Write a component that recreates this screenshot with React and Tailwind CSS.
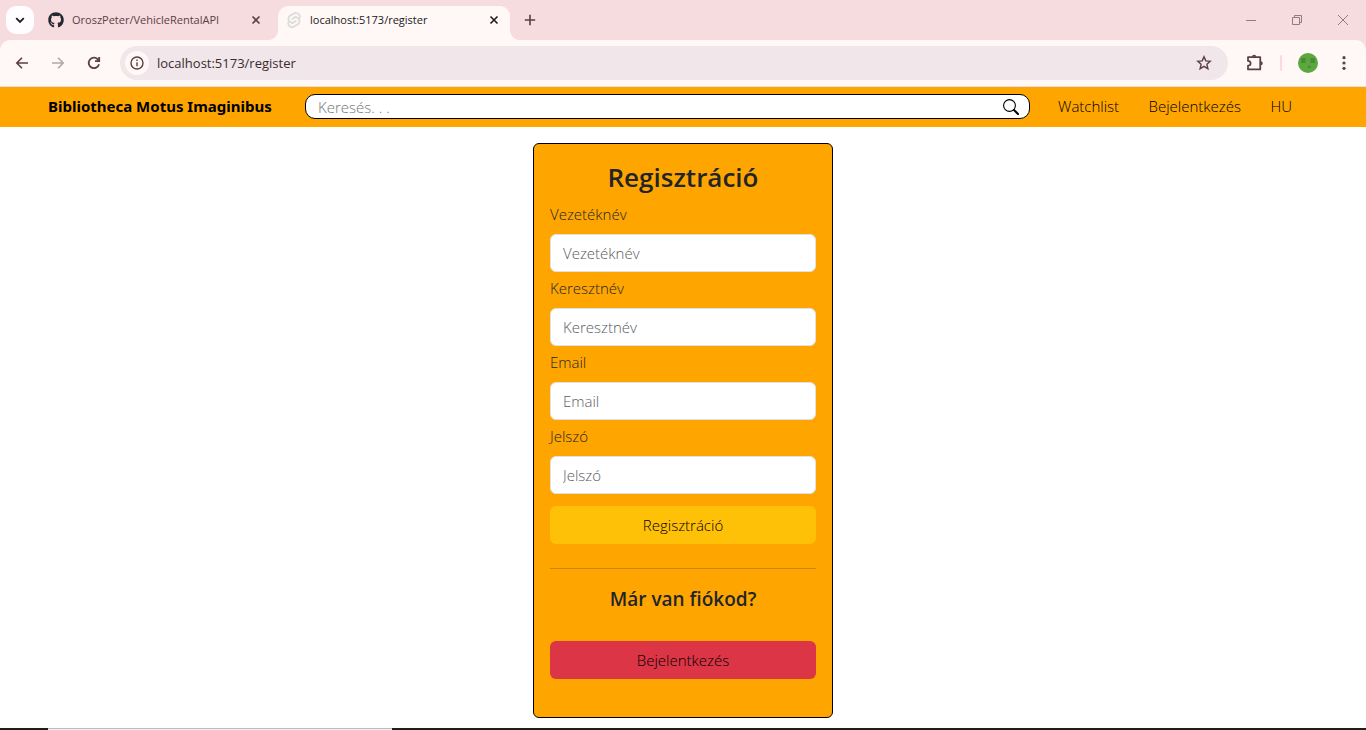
import { FaGithub } from "react-icons/fa";
import { SiSvelte } from "react-icons/si";

function Stroke({ size = 16, width = 1.6, children }) {
  return (
    <svg
      width={size}
      height={size}
      viewBox="0 0 16 16"
      fill="none"
      stroke="currentColor"
      strokeWidth={width}
      aria-hidden="true"
      className="shrink-0"
    >
      {children}
    </svg>
  );
}

function CloseIcon() {
  return (
    <Stroke>
      <path d="M4.500 4.500l7 7M11.500 4.500l-7 7" />
    </Stroke>
  );
}

function TabStrip() {
  return (
    <div className="flex h-10 items-center bg-[#f6dbdf] pl-1.5 text-[11px] text-[#5b3f44]">
      <button type="button" aria-label="Search tabs" className="flex size-7 items-center justify-center rounded-[10px] bg-[#fffdff] text-[#201a1b]">
        <Stroke width={1.8}>
          <path d="M4.2 6.2L8 10l3.8-3.8" />
        </Stroke>
      </button>
      <div className="ml-3.5 flex w-[220px] items-center">
        <FaGithub className="size-4 shrink-0 text-[#24292f]" />
        <span className="ml-2 grow whitespace-nowrap">OroszPeter/VehicleRentalAPI</span>
        <button type="button" aria-label="Close tab" className="mr-1">
          <CloseIcon />
        </button>
      </div>
      <span className="size-2.5 self-end bg-[radial-gradient(circle_at_0_0,#f6dbdf_9.5px,#fff8f7_10.5px)]" />
      <div className="flex h-[34px] w-[232px] items-center self-end rounded-t-[10px] bg-[#fff8f7] pb-1.5 pl-2 text-[#201a1b]">
        <SiSvelte className="size-4 shrink-0 text-[#dcdcdc]" />
        <span className="ml-2 grow whitespace-nowrap">localhost:5173/register</span>
        <button type="button" aria-label="Close tab" className="mr-2">
          <CloseIcon />
        </button>
      </div>
      <span className="size-2.5 self-end bg-[radial-gradient(circle_at_100%_0,#f6dbdf_9.5px,#fff8f7_10.5px)]" />
      <button type="button" aria-label="New tab" className="ml-0.5">
        <Stroke>
          <path d="M8 2.8v10.4M2.8 8h10.4" />
        </Stroke>
      </button>
      <div className="ml-auto flex items-center gap-[30px] pr-[15px] text-[#8f7d81]">
        <button type="button" aria-label="Minimize">
          <Stroke width={1}>
            <path d="M3 8.5h10" />
          </Stroke>
        </button>
        <button type="button" aria-label="Restore">
          <Stroke width={1}>
            <path d="M3.5 5.5h7v7h-7zM5.500 5.500v-2h7v7h-2" />
          </Stroke>
        </button>
        <button type="button" aria-label="Close">
          <Stroke width={1}>
            <path d="M3 3l10 10M13 3L3 13" />
          </Stroke>
        </button>
      </div>
    </div>
  );
}

function Toolbar() {
  return (
    <div className="bg-[#f6dbdf]">
      <div className="flex h-[47px] items-center rounded-t-[10px] border-b border-[#eadde3] bg-[#fff8f7] pr-3.5 pl-3.5 text-[#5b3f44]">
        <button type="button" aria-label="Back">
          <Stroke>
            <path d="M14 8H3M8 2.800L2.800 8l5.200 5.200" />
          </Stroke>
        </button>
        <button type="button" aria-label="Forward" className="ml-5 text-[#b5a5a7]">
          <Stroke>
            <path d="M2 8h11M8 2.800L13.200 8 8 13.200" />
          </Stroke>
        </button>
        <button type="button" aria-label="Reload" className="ml-5">
          <Stroke width={1.8}>
            <path d="M13 9.200A5.200 5.200 0 1 1 11.800 4.400L13 5.600M13.200 2v4.200H9" />
          </Stroke>
        </button>
        <div className="ml-[18px] flex h-[34px] grow items-center rounded-full bg-[#f1e6ea] pr-4 pl-[5px]">
          <button type="button" aria-label="Site information" className="flex size-6 items-center justify-center rounded-full bg-[#fff8f7]">
            <Stroke width={1.4}>
              <circle cx="8" cy="8" r="6" />
              <path d="M8 7.200v4M8 4.500v1.400" />
            </Stroke>
          </button>
          <input
            aria-label="Address"
            defaultValue="localhost:5173/register"
            className="ml-2 h-6 min-w-0 grow bg-transparent text-[13px] text-[#3a2c2f] outline-none"
          />
          <button type="button" aria-label="Bookmark this page">
            <Stroke width={1.4}>
              <path d="M8 1.800l1.800 4.100 4.400.4-3.300 3 1 4.400L8 11.400l-3.900 2.300 1-4.400-3.300-3 4.400-.4z" />
            </Stroke>
          </button>
        </div>
        <button type="button" aria-label="Extensions" className="ml-4">
          <Stroke size={20} width={1.4}>
            <path
              strokeLinejoin="round"
              d="M3.200 3.300h9.800v9.800H3.200v-3c1.400 0 2.100-.8 2.100-1.900s-.7-1.900-2.100-1.900z"
            />
            <path fill="currentColor" stroke="none" d="M6.400 3a1.700 1.700 0 0 1 3.400 0zM13.300 6.500a1.700 1.700 0 0 1 0 3.400z" />
          </Stroke>
        </button>
        <span className="ml-4 h-4 w-0.5 rounded bg-[#ffd9df]" />
        <button type="button" aria-label="Profile" className="ml-4">
          <svg width="20" height="20" viewBox="0 0 20 20" aria-hidden="true">
            <circle cx="10" cy="10" r="10" fill="#5ba83f" />
            <path fill="#4a8a3b" d="M3 5h4.500v5H3zM12.500 5H17v5h-4.500zM10 12.500h2.500V15H10z" />
          </svg>
        </button>
        <button type="button" aria-label="Menu" className="ml-[18px]">
          <svg width="16" height="16" viewBox="0 0 16 16" fill="currentColor" aria-hidden="true">
            <circle cx="8" cy="2.700" r="1.600" />
            <circle cx="8" cy="8" r="1.600" />
            <circle cx="8" cy="13.300" r="1.600" />
          </svg>
        </button>
      </div>
    </div>
  );
}

function SiteNav() {
  return (
    <nav className="flex h-10 items-center bg-[#ffa500] pr-[74px] pb-px pl-12 text-black">
      <a href="#home" className="w-[257px] shrink-0 font-['Noto_Sans',sans-serif] text-[15px] font-bold whitespace-nowrap">
        Bibliotheca Motus Imaginibus
      </a>
      <form className="flex h-[25px] grow items-center rounded-[10px] border border-black bg-white pr-2.5 pl-3">
        <input
          type="search"
          aria-label="Keresés"
          placeholder="Keresés. . ."
          className="min-w-0 grow bg-transparent text-[15px] leading-5 font-light outline-none placeholder:text-[#757575]"
        />
        <button type="button" aria-label="Keresés">
          <Stroke width={1.1}>
            <circle cx="6.500" cy="6.500" r="5.900" />
            <path strokeWidth="2" strokeLinecap="round" d="M11 11l4 4" />
          </Stroke>
        </button>
      </form>
      <div className="ml-7 flex w-[234px] justify-between text-[15px] font-light">
        <a href="#watchlist">Watchlist</a>
        <a href="#login">Bejelentkezés</a>
        <a href="#language">HU</a>
      </div>
    </nav>
  );
}

const fields = [
  { id: "last-name", label: "Vezetéknév", type: "text" },
  { id: "first-name", label: "Keresztnév", type: "text" },
  { id: "email", label: "Email", type: "email" },
  { id: "password", label: "Jelszó", type: "password" },
];

function RegisterCard() {
  return (
    <form className="w-[300px] rounded-md border border-black bg-[#ffa500] px-4 pt-4 pb-[38px] text-[#212529]">
      <h1 className="mb-2 text-center text-[26px] leading-[34px] font-semibold">Regisztráció</h1>
      <div className="flex flex-col gap-1">
        {fields.map((field) => (
          <div key={field.id}>
            <label htmlFor={field.id} className="mb-2 block text-[15px] leading-6 font-light">
              {field.label}
            </label>
            <input
              id={field.id}
              type={field.type}
              placeholder={field.label}
              className="h-[38px] w-full rounded-md border border-[#dee2e6] bg-white px-3 text-[15px] font-light outline-none placeholder:text-[#595c5f]"
            />
          </div>
        ))}
      </div>
      <button type="submit" className="mt-3 h-[38px] w-full rounded-md bg-[#ffc107] text-[15px] font-light text-black">
        Regisztráció
      </button>
      <hr className="mt-6 mb-[18px] border-[#c88712]" />
      <h2 className="mb-[30px] text-center text-[19px] leading-6 font-semibold">Már van fiókod?</h2>
      <button type="button" className="h-[38px] w-full rounded-md bg-[#dc3545] text-[15px] font-light text-black">
        Bejelentkezés
      </button>
    </form>
  );
}

export default function App() {
  return (
    <div className="flex min-h-screen flex-col bg-white font-['Open_Sans','Noto_Sans',sans-serif]">
      <TabStrip />
      <Toolbar />
      <SiteNav />
      <main className="flex grow items-start justify-center pt-4 pb-2.5">
        <RegisterCard />
      </main>
      <footer className="flex h-0.5 bg-[#201d18]">
        <span className="ml-12 w-[344px] border-t border-[#bcbcbc] bg-[#f0f0f0]" />
      </footer>
    </div>
  );
}
